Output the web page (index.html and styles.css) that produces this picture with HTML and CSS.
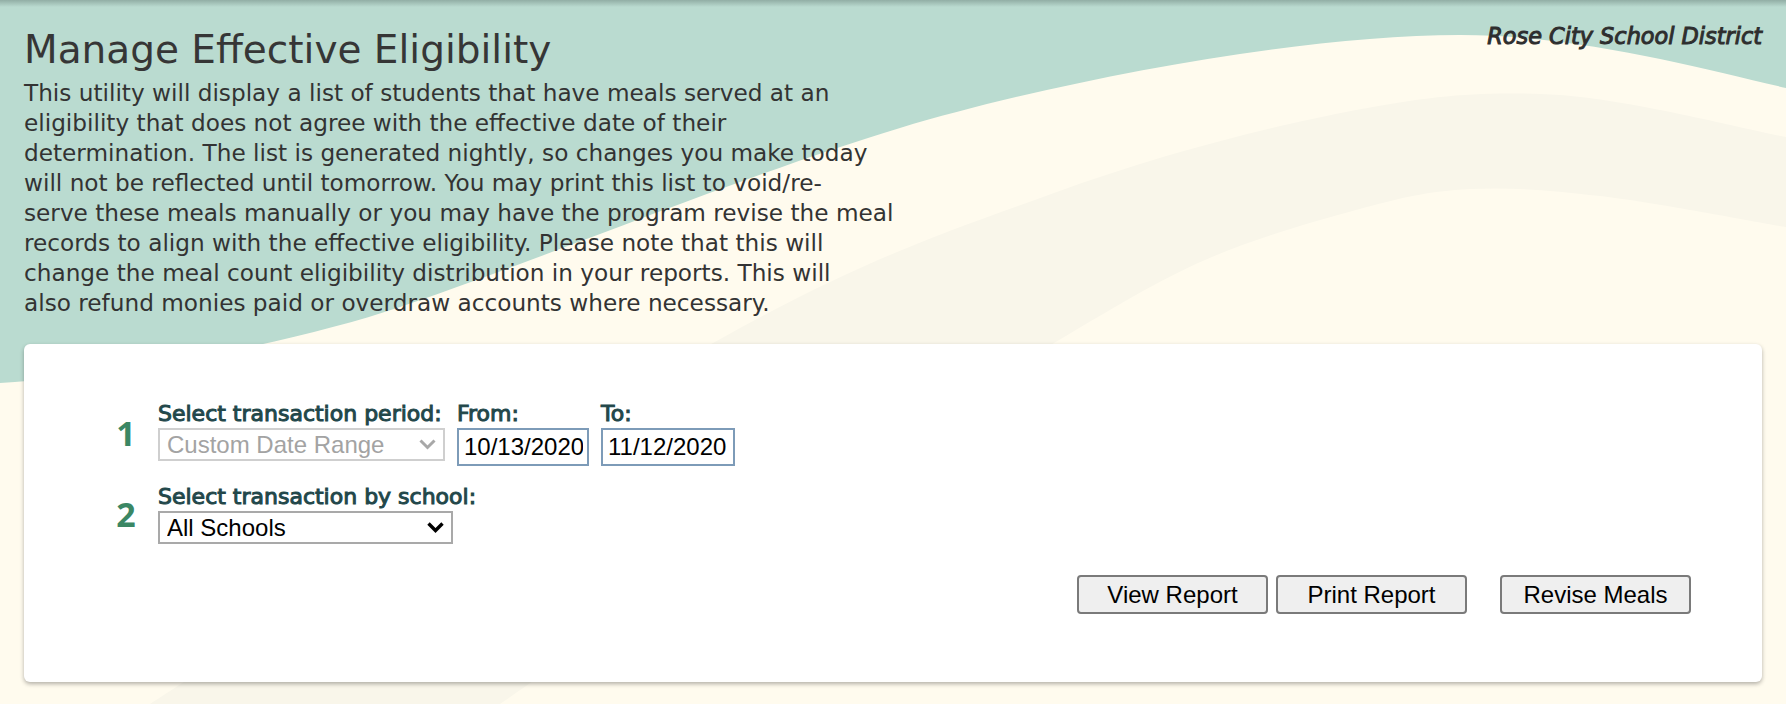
FILE: index.html
```html
<!DOCTYPE html>
<html lang="en">
<head>
    <meta charset="UTF-8">
    <meta name="viewport" content="width=device-width, initial-scale=1.0">
    <title>Manage Effective Eligibility</title>
    <link rel="stylesheet" href="styles.css">
</head>
<body>
    <div class="page">
        <header class="top">
            <div class="intro">
                <h1>Manage Effective Eligibility</h1>
                <p class="blurb">This utility will display a list of students that have meals served at an<br>
                eligibility that does not agree with the effective date of their<br>
                determination. The list is generated nightly, so changes you make today<br>
                will not be reflected until tomorrow. You may print this list to void/re-<br>
                serve these meals manually or you may have the program revise the meal<br>
                records to align with the effective eligibility. Please note that this will<br>
                change the meal count eligibility distribution in your reports. This will<br>
                also refund monies paid or overdraw accounts where necessary.</p>
            </div>
            <div class="district">Rose City School District</div>
        </header>

        <main class="card">
            <div class="step">
                <span class="num">1</span>
                <div class="fields">
                    <div class="field">
                        <label for="period">Select transaction period:</label>
                        <select id="period" class="pick" disabled>
                            <option>Custom Date Range</option>
                        </select>
                    </div>
                    <div class="field">
                        <label for="from">From:</label>
                        <input id="from" class="date" type="text" value="10/13/2020">
                    </div>
                    <div class="field">
                        <label for="to">To:</label>
                        <input id="to" class="date date-to" type="text" value="11/12/2020">
                    </div>
                </div>
            </div>

            <div class="step">
                <span class="num">2</span>
                <div class="field">
                    <label for="school">Select transaction by school:</label>
                    <select id="school" class="pick pick-school">
                        <option>All Schools</option>
                    </select>
                </div>
            </div>

            <div class="actions">
                <button class="btn">View Report</button>
                <button class="btn">Print Report</button>
                <button class="btn btn-revise">Revise Meals</button>
            </div>
        </main>
    </div>
</body>
</html>
```

FILE: styles.css
```css
html, body {
    margin: 0;
}
body {
    min-height: 100vh;
    font-family: "DejaVu Sans", Verdana, sans-serif;
    color: #333;
    background-color: #badbd0;
    background-image:
        linear-gradient(rgba(70, 90, 85, 0.35), rgba(70, 90, 85, 0) 7px),
        url("data:image/svg+xml,%3Csvg xmlns='http://www.w3.org/2000/svg' width='1786' height='704'%3E%3Cpath fill='%23fffbee' d='M0 383C130 375 300 341 400 307C550 256 750 173 900 128C1060 80 1300 35 1460 35C1580 35 1700 68 1786 88V704H0Z'/%3E%3Cpath fill='%23f9f6ea' d='M150 704C244 644 562 428 713 343C864 258 947 232 1054 193C1161 154 1272 126 1356 110C1440 94 1488 91 1560 95C1632 100 1748 130 1786 137V227C1755 222 1653 202 1600 196C1547 190 1511 187 1470 189C1429 191 1400 198 1356 210C1312 222 1255 238 1205 260C1155 282 1122 303 1054 343C987 383 892 440 800 500C708 560 550 670 500 704Z'/%3E%3C/svg%3E");
    background-repeat: no-repeat;
    background-position: 0 0;
}
.page {
    padding: 20px 24px 21px;
}
.top {
    display: flex;
    justify-content: space-between;
    align-items: flex-start;
}
h1 {
    margin: 8px 0 0;
    font-size: 39px;
    line-height: 44px;
    font-weight: normal;
    color: #363636;
}
.blurb {
    margin: 6px 0 0;
    font-size: 23.2px;
    line-height: 30px;
    color: #333;
}
/* the site's bold is a thickened regular, so widths stay the regular ones */
.district {
    margin-top: 2px;
    font-size: 22.4px;
    line-height: 28px;
    font-style: italic;
    -webkit-text-stroke: 1px currentColor;
    color: #2e2e2e;
}
.card {
    margin-top: 26px;
    background: #fff;
    border-radius: 6px;
    box-shadow: 0 2px 4px rgba(0, 0, 0, 0.3);
    padding: 56px 71px 68px 92px;
}
.step {
    display: flex;
    align-items: center;
    margin-bottom: 17px;
}
.num {
    width: 20px;
    margin-right: 22px;
    text-align: center;
    font-family: "Open Sans", sans-serif;
    font-size: 34px;
    font-weight: bold;
    color: #3b8764;
}
.fields {
    display: flex;
    gap: 12px;
}
.field {
    display: flex;
    flex-direction: column;
}
.field label {
    font-size: 22px;
    line-height: 28px;
    -webkit-text-stroke: 1px currentColor;
    color: #22474a;
}
.pick {
    appearance: none;
    -webkit-appearance: none;
    box-sizing: border-box;
    width: 287px;
    height: 33px;
    padding: 0 30px 0 7px;
    border: 2px solid #cfcfcf;
    border-radius: 0;
    font-family: "Liberation Sans", Arial, sans-serif;
    font-size: 24px;
    color: #a3a3a3;
    background: #fff url("data:image/svg+xml,%3Csvg xmlns='http://www.w3.org/2000/svg' width='17' height='11'%3E%3Cpath d='M1.5 1.5 8.5 8.5l7-7' fill='none' stroke='%23a8a8a8' stroke-width='3'/%3E%3C/svg%3E") no-repeat right 7px center;
    opacity: 1;
}
.pick-school {
    width: 295px;
    border-color: #a9a9a9;
    color: #000;
    background-image: url("data:image/svg+xml,%3Csvg xmlns='http://www.w3.org/2000/svg' width='17' height='11'%3E%3Cpath d='M1.5 1.5 8.5 8.5l7-7' fill='none' stroke='%23000' stroke-width='3.4'/%3E%3C/svg%3E");
}
.date {
    box-sizing: border-box;
    width: 132px;
    height: 38px;
    padding: 0 4px 0 5px;
    border: 2px solid #7d9bb8;
    border-radius: 0;
    font-family: "Liberation Sans", Arial, sans-serif;
    font-size: 24px;
    color: #000;
    background: #fff;
}
.date-to {
    width: 134px;
}
.actions {
    display: flex;
    justify-content: flex-end;
    gap: 8px;
    margin-top: 31px;
}
.btn {
    box-sizing: border-box;
    width: 191px;
    height: 39px;
    border: 2px solid #7a7a7a;
    border-radius: 4px;
    background: #efefef;
    font-family: "Liberation Sans", Arial, sans-serif;
    font-size: 24px;
    color: #000;
}
.btn-revise {
    margin-left: 25px;
}
```
